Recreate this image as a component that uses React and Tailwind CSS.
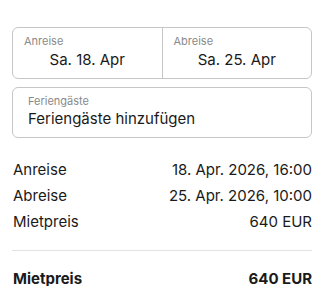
import React from "react";

const font = { fontFamily: "Inter, 'Liberation Sans', sans-serif" };

const rows = [
  { label: "Anreise", value: "18. Apr. 2026, 16:00" },
  { label: "Abreise", value: "25. Apr. 2026, 10:00" },
  { label: "Mietpreis", value: "640 EUR" },
];

export default function App() {
  return (
    <div className="w-[327px] h-[286px] bg-white pt-[27px] text-[#1a1a1a] overflow-hidden" style={font}>
      <div className="ml-3 w-[300px]">
        {/* Dates */}
        <div className="flex h-[52px] rounded-md border border-[#c6c6c6]">
          <div className="flex-1 flex flex-col pl-[11px] pt-[6px] border-r border-[#c6c6c6]">
            <span className="text-[11px] leading-[14px] text-[#8a8a8a]">Anreise</span>
            <span className="text-[15px] leading-[20px] text-center pr-[11px] mt-[2px]">Sa. 18. Apr</span>
          </div>
          <div className="flex-1 flex flex-col pl-[11px] pt-[6px]">
            <span className="text-[11px] leading-[14px] text-[#8a8a8a]">Abreise</span>
            <span className="text-[15px] leading-[20px] text-center pr-[11px] mt-[2px]">Sa. 25. Apr</span>
          </div>
        </div>

        {/* Guests */}
        <div className="mt-2 h-[51px] rounded-md border border-[#c6c6c6] flex flex-col pl-[15px] pt-[6px]">
          <span className="text-[11px] leading-[14px] text-[#8a8a8a]">Feriengäste</span>
          <span className="text-[15px] leading-[20px] mt-px">Feriengäste hinzufügen</span>
        </div>

        {/* Summary */}
        <div className="mt-[19px] flex flex-col">
          {rows.map((row) => (
            <div key={row.label} className="flex justify-between h-[26px] items-center text-[15px] pl-px">
              <span>{row.label}</span>
              <span>{row.value}</span>
            </div>
          ))}
        </div>

        <div className="mt-[15px] border-t border-[#e3e3e3]" />

        <div className="mt-[20px] flex justify-between text-[15px] leading-[15px] font-bold pl-px">
          <span>Mietpreis</span>
          <span>640 EUR</span>
        </div>
      </div>
    </div>
  );
}
